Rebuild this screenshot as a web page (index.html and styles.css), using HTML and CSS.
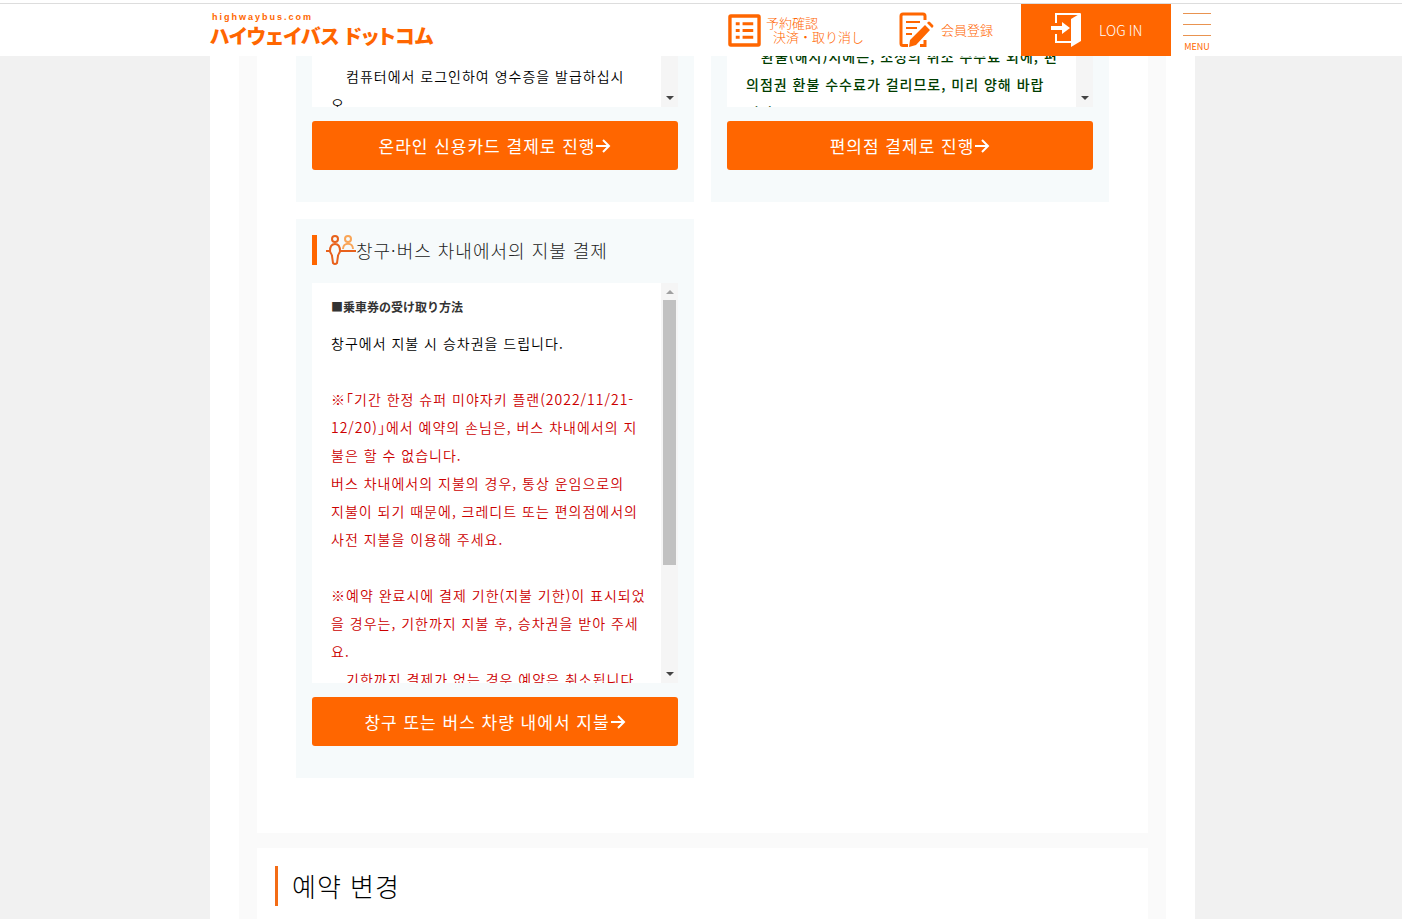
FILE: index.html
```html
<!DOCTYPE html>
<html lang="ko">
<head>
    <meta charset="UTF-8">
    <meta name="viewport" content="width=device-width, initial-scale=1.0">
    <title>ハイウェイバスドットコム</title>
    <link rel="stylesheet" href="styles.css">
</head>
<body>
<!-- Header -->
<header class="header" lang="ja">
    <a class="logo" href="#">
        <span class="logo-domain">highwaybus.com</span>
        <span class="logo-name">ハイウェイバス ドットコム</span>
    </a>
    <nav class="nav">
        <a class="nav-link nav-reserve" href="#">
            <svg width="33" height="33" viewBox="0 0 34 34" fill="none" stroke="#ff6600">
                <rect x="2" y="2" width="30" height="30" rx="1" stroke-width="3.500"/>
                <path d="M8 10h4M8 17h4M8 24h4M15 10h11M15 17h11M15 24h11" stroke-width="3"/>
            </svg>
            <span class="nav-text">
                <span>予約確認</span>
                <span class="nav-second">決済・取り消し</span>
            </span>
        </a>
        <a class="nav-link nav-member" href="#">
            <svg width="35" height="36" viewBox="0 0 35 36" fill="none" stroke="#ff6600">
                <path d="M9 33.500H4a2 2 0 0 1-2-2V4a2 2 0 0 1 2-2h20a2 2 0 0 1 2 2v4M26 28v5.500h-5" stroke-width="3"/>
                <path d="M7 10h14M7 16h11M7 22h6" stroke-width="2"/>
                <path d="M26 13l5 5-14 15-7 2 1-7zM28 11l1-1q1-1 2 0l3 3q1 1 0 2l-1 1z" fill="#ff6600" stroke="none"/>
            </svg>
            <span>会員登録</span>
        </a>
        <a class="login" href="#">
            <svg width="31" height="36" viewBox="0 0 31 36">
                <path d="M5 11V2h24M5 22v8h16" fill="none" stroke="#fff" stroke-width="2"/>
                <path d="M20 7l10-6v28l-10 6z" fill="#fff"/>
                <path d="M0 14h11v-4l8 6-8 6v-4H0z" fill="#fff"/>
            </svg>
            <span>LOG IN</span>
        </a>
        <button class="menu" type="button">
            <span class="menu-line"></span>
            <span class="menu-line"></span>
            <span class="menu-line"></span>
            <span class="menu-text">MENU</span>
        </button>
    </nav>
</header>

<main class="wrap">
    <div class="inner">
        <!-- Payment methods -->
        <section class="section payments">
            <div class="card">
                <div class="scroll-box">
                    <div class="scroll-text first-text">
                        <p>　컴퓨터에서 로그인하여 영수증을 발급하십시<br>오.</p>
                    </div>
                    <div class="scrollbar"><span class="arrow-down"></span></div>
                </div>
                <button class="pay-button" type="button">온라인 신용카드 결제로 진행<svg width="16" height="16" viewBox="0 0 16 16"><path d="M1 8h13M8 2l6 6-6 6"/></svg></button>
            </div>
            <div class="card">
                <div class="scroll-box">
                    <div class="scroll-text">
                        <p class="notice">　환불(해지)시에는, 소정의 취소 수수료 외에, 편<br>의점권 환불 수수료가 걸리므로, 미리 양해 바랍<br>니다.</p>
                    </div>
                    <div class="scrollbar"><span class="arrow-down"></span></div>
                </div>
                <button class="pay-button" type="button">편의점 결제로 진행<svg width="16" height="16" viewBox="0 0 16 16"><path d="M1 8h13M8 2l6 6-6 6"/></svg></button>
            </div>
            <div class="card">
                <h3 class="card-title">
                    <svg width="30" height="30" viewBox="0 0 30 30" fill="none">
                        <g stroke="#f9a557" stroke-width="2">
                            <circle cx="22" cy="4" r="3"/>
                            <path d="M17 14c0-7 10-7 10 0"/>
                        </g>
                        <g stroke="#e8611c" stroke-width="2">
                            <circle cx="9" cy="4" r="3"/>
                            <path d="M0 16h4M14 16h16M9 9c-4 0-5 3-5 7 0 2 2 3 2 5l1 7q2 2 4 0l1-7c0-2 2-3 2-5 0-4-1-7-5-7z"/>
                        </g>
                    </svg>창구·버스 차내에서의 지불 결제
                </h3>
                <div class="scroll-box tall">
                    <div class="scroll-text">
                        <h4 class="ticket-title" lang="ja">■乗車券の受け取り方法</h4>
                        <p>창구에서 지불 시 승차권을 드립니다.</p>
                        <p class="warning"><br>※「기간 한정 슈퍼 미야자키 플랜(2022/11/21-<br>12/20)」에서 예약의 손님은, 버스 차내에서의 지<br>불은 할 수 없습니다.<br>버스 차내에서의 지불의 경우, 통상 운임으로의<br>지불이 되기 때문에, 크레디트 또는 편의점에서의<br>사전 지불을 이용해 주세요.</p>
                        <p class="warning"><br>※예약 완료시에 결제 기한(지불 기한)이 표시되었<br>을 경우는, 기한까지 지불 후, 승차권을 받아 주세<br>요.<br>　기한까지 결제가 없는 경우 예약은 취소됩니다</p>
                    </div>
                    <div class="scrollbar">
                        <span class="arrow-up"></span>
                        <span class="thumb"></span>
                        <span class="arrow-down"></span>
                    </div>
                </div>
                <button class="pay-button" type="button">창구 또는 버스 차량 내에서 지불<svg width="16" height="16" viewBox="0 0 16 16"><path d="M1 8h13M8 2l6 6-6 6"/></svg></button>
            </div>
        </section>

        <!-- Reservation change -->
        <section class="section change">
            <h2 class="section-title">예약 변경</h2>
        </section>
    </div>
</main>
</body>
</html>
```
FILE: styles.css
```css
* {
    box-sizing: border-box;
}
body {
    margin: 0;
    background-color: #f1f1f1;
    color: #000;
    font-family: "Noto Sans CJK KR", sans-serif;
    font-size: 14px;
    font-weight: 350;
    line-height: 28px;
}
h2, h3, h4, p {
    margin: 0;
    font-weight: 350;
}
a {
    text-decoration: none;
}
button {
    border: none;
    cursor: pointer;
    font-family: inherit;
}

/* Header */
.header {
    position: fixed;
    top: 0;
    left: 0;
    right: 0;
    z-index: 10;
    display: flex;
    justify-content: space-between;
    height: 56px;
    padding: 4px 191px 0 210px;
    background: linear-gradient(#fff 3px, #ddd 3px, #ddd 4px, #fff 4px);
    font-family: "Noto Sans CJK JP", sans-serif;
    font-weight: 300;
}
.logo {
    display: flex;
    flex-direction: column;
    padding-top: 9px;
    color: #ff6600;
    white-space: nowrap;
}
.logo-domain {
    padding-left: 2px;
    font: bold 9px/9px "Liberation Sans", sans-serif;
    letter-spacing: 2px;
}
.logo-name {
    font-size: 20px;
    font-weight: 900;
    line-height: 28px;
    font-feature-settings: "palt";
}
.nav {
    display: flex;
}
.nav-link {
    display: flex;
    align-items: center;
    color: #ff6600;
    font-size: 13px;
    line-height: 14px;
    white-space: nowrap;
}
.nav-reserve {
    gap: 5px;
    margin-right: 35px;
}
.nav-member {
    gap: 7px;
    margin-right: 28px;
}
.nav-text {
    display: flex;
    flex-direction: column;
}
.nav-second {
    padding-left: 7px;
}
.login {
    display: flex;
    align-items: center;
    gap: 17px;
    width: 150px;
    padding-left: 30px;
    background-color: #ff6600;
    color: #fff;
    font-size: 14px;
}
.menu {
    display: flex;
    flex-direction: column;
    gap: 10px;
    width: 28px;
    margin-left: 12px;
    padding: 9px 0 0;
    background: none;
    color: #ff6600;
}
.menu-line {
    width: 28px;
    height: 1px;
    background-color: #e99350;
}
.menu-text {
    margin-top: -4px;
    font-size: 9px;
    line-height: 10px;
}

/* Page */
.wrap {
    min-height: 100vh;
    margin: 0 207px 0 210px;
    padding: 0 29px;
    background-color: #fff;
}
.inner {
    display: flex;
    flex-direction: column;
    gap: 15px;
    min-height: 100vh;
    padding: 0 18px;
    background-color: #fafafa;
}
.section {
    background-color: #fff;
}
.payments {
    display: grid;
    grid-template-columns: repeat(2, minmax(0, 1fr));
    gap: 17px;
    padding: 26px 39px 55px;
}
.card {
    padding: 16px 16px 32px;
    background-color: #f6fafb;
}
.card-title {
    display: flex;
    align-items: center;
    height: 30px;
    margin-bottom: 18px;
    padding-left: 9px;
    border-left: 5px solid #ff6600;
    color: #222;
    font-size: 18px;
    font-weight: 300;
    letter-spacing: 1px;
    white-space: nowrap;
}

/* Text with scrollbar */
.scroll-box {
    display: flex;
    height: 65px;
    overflow: hidden;
    background-color: #fff;
}
.scroll-box.tall {
    height: 400px;
}
.scroll-text {
    flex: 1;
    min-width: 0;
    padding: 0 19px;
    letter-spacing: 1px;
    white-space: nowrap;
    font-feature-settings: "halt";
}
.first-text {
    padding-top: 20px;
}
.notice {
    color: #003c00;
    font-weight: 500;
}
.ticket-title {
    padding: 10px 0 8px;
    color: #333;
    font-family: "Noto Sans CJK JP", sans-serif;
    font-size: 12px;
    font-weight: bold;
    letter-spacing: 0;
    font-feature-settings: normal;
}
.warning {
    color: #c00;
}
.scrollbar {
    display: flex;
    flex-direction: column;
    flex-shrink: 0;
    align-items: center;
    width: 17px;
    padding: 7px 0;
    background-color: #f5f5f5;
}
.arrow-up,
.arrow-down {
    border: 4px solid transparent;
}
.arrow-up {
    border-top: none;
    border-bottom-color: #a0a0a0;
}
.arrow-down {
    margin-top: auto;
    border-bottom: none;
    border-top-color: #444;
}
.thumb {
    width: 13px;
    height: 265px;
    margin-top: 6px;
    background-color: #c1c1c1;
}
.pay-button {
    display: flex;
    align-items: center;
    justify-content: center;
    width: 100%;
    height: 49px;
    margin-top: 14px;
    border-radius: 3px;
    background-color: #ff6600;
    color: #fff;
    font-size: 17px;
    font-weight: 400;
    letter-spacing: 1px;
}
.pay-button svg {
    fill: none;
    stroke: #fff;
    stroke-width: 2;
}

/* Reservation change */
.change {
    padding: 18px 18px 13px;
}
.section-title {
    padding-left: 14px;
    border-left: 3px solid #f36c16;
    font-size: 26px;
    font-weight: 300;
    line-height: 40px;
    letter-spacing: 1px;
}
```
